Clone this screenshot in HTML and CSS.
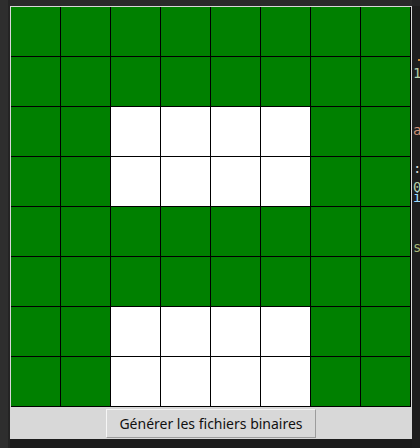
FILE: index.html
```html
<!DOCTYPE html>
<html lang="fr">
<head>
<meta charset="utf-8">
<title>Grille</title>
<link rel="stylesheet" href="styles.css">
</head>
<body>
<div class="side"></div>
<div class="main">
  <div class="win">
    <div class="grid">
      <div class="c g"></div><div class="c g"></div><div class="c g"></div><div class="c g"></div><div class="c g"></div><div class="c g"></div><div class="c g"></div><div class="c g"></div>
      <div class="c g"></div><div class="c g"></div><div class="c g"></div><div class="c g"></div><div class="c g"></div><div class="c g"></div><div class="c g"></div><div class="c g"></div>
      <div class="c g"></div><div class="c g"></div><div class="c w"></div><div class="c w"></div><div class="c w"></div><div class="c w"></div><div class="c g"></div><div class="c g"></div>
      <div class="c g"></div><div class="c g"></div><div class="c w"></div><div class="c w"></div><div class="c w"></div><div class="c w"></div><div class="c g"></div><div class="c g"></div>
      <div class="c g"></div><div class="c g"></div><div class="c g"></div><div class="c g"></div><div class="c g"></div><div class="c g"></div><div class="c g"></div><div class="c g"></div>
      <div class="c g"></div><div class="c g"></div><div class="c g"></div><div class="c g"></div><div class="c g"></div><div class="c g"></div><div class="c g"></div><div class="c g"></div>
      <div class="c g"></div><div class="c g"></div><div class="c w"></div><div class="c w"></div><div class="c w"></div><div class="c w"></div><div class="c g"></div><div class="c g"></div>
      <div class="c g"></div><div class="c g"></div><div class="c w"></div><div class="c w"></div><div class="c w"></div><div class="c w"></div><div class="c g"></div><div class="c g"></div>
    </div>
    <div class="bar">
      <button class="btn" type="button">Générer les fichiers binaires</button>
    </div>
  </div>
</div>
<div class="editor">
  <div class="mark"></div>
  <div class="ln l1"><span class="num">1</span></div>
  <div class="ln l2"><span class="str">a</span></div>
  <div class="ln l3"><span class="pun">:</span></div>
  <div class="ln l4"><span class="num">0</span></div>
  <div class="ln l5"><span class="var">i</span></div>
  <div class="ln l6"><span class="cmt">s</span></div>
</div>
</body>
</html>
```
FILE: styles.css
```css
html, body {
  margin: 0;
  padding: 0;
}
body {
  width: 420px;
  height: 448px;
  overflow: hidden;
  display: flex;
  background: #1e1e1e;
  font-family: "Noto Sans", "DejaVu Sans", sans-serif;
}
.side {
  width: 10px;
  flex: none;
  background: linear-gradient(to right, #2e2e2e 0, #2e2e2e 8px, #242424 8px, #242424 10px);
}
.main {
  width: 402px;
  flex: none;
  padding-top: 6px;
  background: linear-gradient(to bottom, #2a2a2a 0, #2a2a2a 6px, #1c1c1c 6px);
}
.win {
  width: 402px;
  height: 433px;
  box-sizing: border-box;
  background: #d8d8d8;
  padding: 1px;
  display: flex;
  flex-direction: column;
}
.grid {
  display: grid;
  grid-template-columns: repeat(8, 50px);
  grid-auto-rows: 50px;
  width: 400px;
}
.c {
  box-sizing: border-box;
  border-right: 1px solid #000;
  border-bottom: 1px solid #000;
}
.g { background: #008000; }
.w { background: #ffffff; }
.bar {
  display: flex;
  justify-content: center;
  padding-top: 2px;
}
.btn {
  width: 210px;
  height: 29px;
  box-sizing: border-box;
  margin: 0;
  padding: 0 0 1px;
  background: #d8d8d8;
  border: 1px solid;
  border-color: #f6f6f6 #9c9c9c #9c9c9c #f6f6f6;
  border-radius: 0;
  font-family: "Noto Sans", "DejaVu Sans", sans-serif;
  font-size: 14px;
  color: #111;
}
.editor {
  flex: 1;
  padding-left: 1px;
  background: linear-gradient(to bottom, #252526 0, #252526 6px, #1e1e1e 6px);
  font-family: "DejaVu Sans Mono", monospace;
  font-size: 14px;
  line-height: 14px;
  overflow: hidden;
  white-space: nowrap;
}
.mark {
  margin: 59px 0 0 5px;
  width: 3px;
  height: 2px;
  background: #c98a3a;
}
.ln { height: 14px; }
.l1 { margin-top: 5px; }
.l2 { margin-top: 43px; }
.l3 { margin-top: 24px; }
.l4 { margin-top: 7px; height: 10px; line-height: 10px; }
.l5 { margin-top: 0; height: 10px; line-height: 10px; }
.l6 { margin-top: 38px; }
.num { color: #b5cea8; }
.str { color: #ce9178; }
.pun { color: #d4d4d4; }
.var { color: #9cdcfe; }
.cmt { color: #a6b77a; }
```
